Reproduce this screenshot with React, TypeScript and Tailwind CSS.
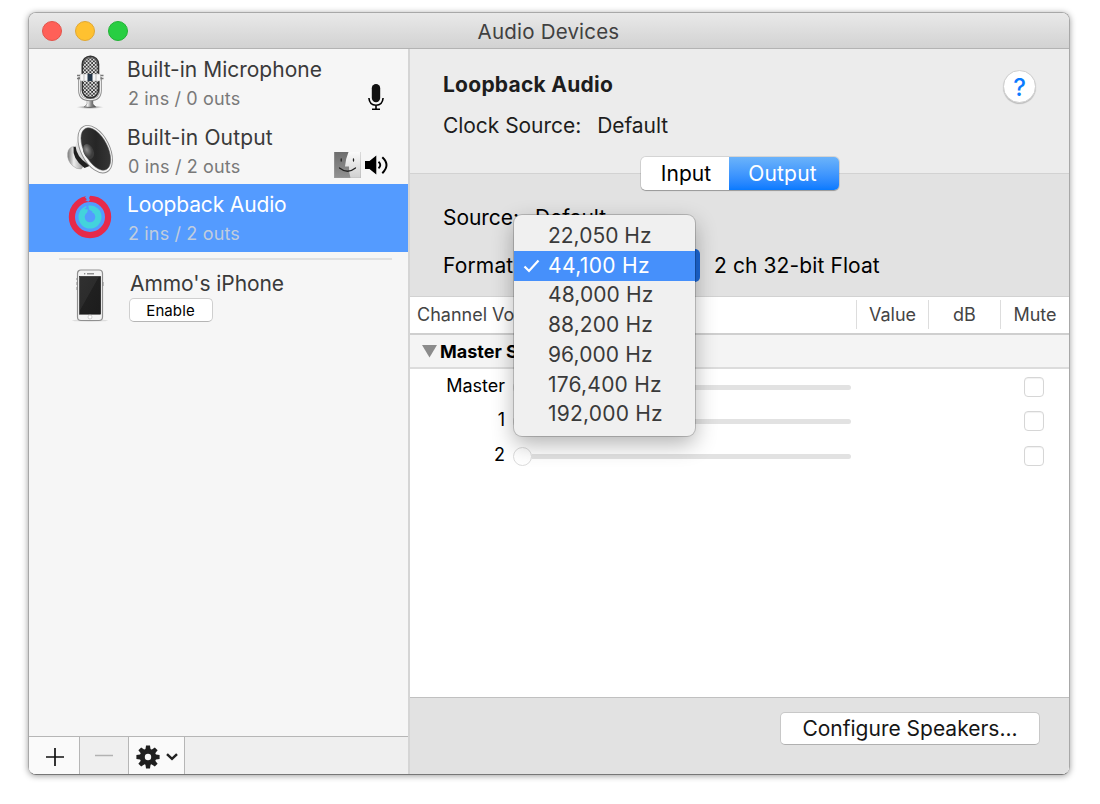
import type { ReactNode } from "react";

function Label({ children, className = "" }: { children: ReactNode; className?: string }) {
  return <span className={`block whitespace-nowrap ${className}`}>{children}</span>;
}

function MicrophoneIcon() {
  return (
    <svg width="30" height="56" viewBox="0 0 30 56" className="block">
      <defs>
        <linearGradient id="micMetal" x1="0" x2="1" y1="0" y2="0">
          <stop offset="0" stopColor="#666" />
          <stop offset=".3" stopColor="#f4f4f4" />
          <stop offset=".6" stopColor="#888" />
          <stop offset="1" stopColor="#444" />
        </linearGradient>
        <pattern id="micMesh" width="3.6" height="3.6" patternUnits="userSpaceOnUse">
          <rect width="3.6" height="3.6" fill="#2e2e2e" />
          <circle cx=".9" cy=".9" r="1.05" fill="#f4f4f4" />
          <circle cx="2.7" cy="2.7" r="1.05" fill="#e4e4e4" />
        </pattern>
        <radialGradient id="micBase">
          <stop offset="0" stopColor="#444" />
          <stop offset="1" stopColor="#aaa" stopOpacity="0" />
        </radialGradient>
      </defs>
      <ellipse cx="15" cy="52.200" rx="14" ry="1.800" fill="url(#micBase)" />
      <path d="M12 44h6v5l3 3H9l3-3z" fill="url(#micMetal)" stroke="#666" strokeWidth=".4" />
      <path d="M4.500 22v13q0 10 10.500 10T25.500 35V22" fill="none" stroke="#858585" strokeWidth="2.600" />
      <path d="M4.500 23v12q0 9.600 10.500 9.600T25.500 35V23" fill="none" stroke="#ececec" strokeWidth="1.100" />
      <rect x="7.300" y="1.200" width="16.200" height="41.800" rx="8" fill="url(#micMesh)" stroke="#333" strokeWidth="1.600" />
      <path d="M8.500 9q1-6.500 7-6.500t7 6.500" fill="none" stroke="#555" strokeWidth="1.600" opacity=".7" />
      <rect x="5" y="19" width="20.500" height="7" rx="1" fill="#f6f6f6" stroke="#aaa" strokeWidth=".5" />
      <rect x="12.500" y="19" width="5" height="7" fill="#26384a" />
      <path d="M9 19v7M21 19v7" stroke="#bbb" strokeWidth="1" />
      <path d="M2 20.500h3M2 23.500h3M25.500 20.500h3M25.500 23.500h3" stroke="#777" strokeWidth="1.400" />
    </svg>
  );
}

function LoudspeakerIcon() {
  return (
    <svg width="50" height="54" viewBox="0 0 50 54" className="block">
      <defs>
        <linearGradient id="spMagnet" x1="0" x2="1">
          <stop offset="0" stopColor="#777" />
          <stop offset=".35" stopColor="#eee" />
          <stop offset="1" stopColor="#888" />
        </linearGradient>
        <linearGradient id="spBody" x1="0" x2="1" y1="0" y2="1">
          <stop offset="0" stopColor="#f2f2f2" />
          <stop offset=".5" stopColor="#d0d0d0" />
          <stop offset="1" stopColor="#888" />
        </linearGradient>
        <linearGradient id="spCone" x1="0" x2="1" y1="0" y2="1">
          <stop offset="0" stopColor="#3c3c3c" />
          <stop offset=".5" stopColor="#262626" />
          <stop offset="1" stopColor="#3b3b3b" />
        </linearGradient>
        <radialGradient id="spDome" cx=".4" cy=".35">
          <stop offset="0" stopColor="#8e8e8e" />
          <stop offset="1" stopColor="#3e3e3e" />
        </radialGradient>
      </defs>
      <path d="M9 24.500q-5.500.5-6.300 6.500-.7 7.500 4.600 12.500 4 4 9 3.500l4-6z" fill="url(#spMagnet)" stroke="#999" strokeWidth=".5" />
      <path d="M8.500 25q-1.500 12 11 21l5-2-11-20z" fill="#202020" />
      <path d="M15 6Q12 20 10.500 24q1 11 12 18 9 5 18 9L20 4z" fill="url(#spBody)" />
      <ellipse cx="30.200" cy="27.200" rx="14.300" ry="25.600" transform="rotate(-27 30.200 27.200)" fill="#f6f6f6" stroke="#8c8c8c" strokeWidth=".9" />
      <ellipse cx="30.800" cy="27" rx="11.800" ry="23" transform="rotate(-27 30.800 27)" fill="url(#spCone)" stroke="#555" strokeWidth=".5" />
      <ellipse cx="23.500" cy="29.500" rx="5" ry="7.800" transform="rotate(-22 23.500 29.500)" fill="url(#spDome)" />
    </svg>
  );
}

function LoopbackIcon() {
  return (
    <svg width="44" height="44" viewBox="0 0 44 44" className="block" fill="none">
      <circle cx="22" cy="22" r="18.100" stroke="#e62a4a" strokeWidth="6.200" />
      <circle cx="22" cy="22" r="8.400" stroke="#43d3dc" strokeWidth="6.200" />
      <path d="M18.500 0L17 2.600l2 1.600-1.600 1 3 1.600L22 5l-1-2 1.500-3z" fill="#549bff" />
      <path d="M17.500 9l1 3.200-2 1.800 3.500.5-1 3.500 4 .5 1.500-2-3.500-2L20 9z" fill="#549bff" />
    </svg>
  );
}

function PhoneIcon() {
  return (
    <svg width="36" height="54" viewBox="0 0 36 54" className="block">
      <defs>
        <linearGradient id="phScreen" x1="0" x2="1" y1="0" y2="1">
          <stop offset="0" stopColor="#303030" />
          <stop offset=".45" stopColor="#2c2c2c" />
          <stop offset=".47" stopColor="#202020" />
          <stop offset="1" stopColor="#1c1c1c" />
        </linearGradient>
      </defs>
      <ellipse cx="18" cy="51.500" rx="18" ry="1.200" fill="#ddd" />
      <rect x="5.500" y="1" width="25" height="50.500" rx="3.500" fill="#f3f3f3" stroke="#909090" strokeWidth="1.200" />
      <rect x="7.500" y="7.400" width="21.200" height="37.800" fill="url(#phScreen)" stroke="#111" strokeWidth=".5" />
      <path d="M15 4.800h7" stroke="#777" strokeWidth="1.200" />
      <circle cx="12.700" cy="4.800" r=".7" fill="#777" />
      <circle cx="18" cy="48" r="2" fill="#fff" stroke="#bbb" strokeWidth=".7" />
      <path d="M5 9v2M5 13v3M5 18v3M31 13v4" stroke="#888" strokeWidth="1" />
    </svg>
  );
}

function FinderIcon() {
  return (
    <svg width="27" height="26" viewBox="0 0 27 26" className="block">
      <defs>
        <linearGradient id="fLeft" x1="0" x2="0" y1="0" y2="1">
          <stop offset="0" stopColor="#6e6e6e" />
          <stop offset="1" stopColor="#929292" />
        </linearGradient>
        <linearGradient id="fRight" x1="0" x2="0" y1="0" y2="1">
          <stop offset="0" stopColor="#fafafa" />
          <stop offset="1" stopColor="#d0d0d0" />
        </linearGradient>
      </defs>
      <rect width="27" height="26" fill="url(#fRight)" />
      <path d="M0 0h14.500Q11.500 7 11 14.500h4q-.300 6 1.500 11.500H0z" fill="url(#fLeft)" />
      <path d="M5.500 16q8 6.500 16 0" fill="none" stroke="#222" strokeWidth="1.300" strokeLinecap="round" />
      <path d="M7.200 7v2M19.500 7v2" stroke="#222" strokeWidth="1.300" strokeLinecap="round" />
      <path d="M.3 0v26h26.400V0" fill="none" stroke="#aaa" strokeWidth=".5" />
    </svg>
  );
}

function VolumeGlyph() {
  return (
    <svg width="24" height="20" viewBox="0 0 24 20" className="block" fill="none">
      <path d="M0 6h4.500L11.300.5v19L4.500 14H0z" fill="#000" />
      <path d="M13.500 6.800q3.600 3.200 0 6.600" stroke="#000" strokeWidth="1.900" />
      <path d="M17.300 2.200q8.400 7.800 0 16" stroke="#000" strokeWidth="2" />
    </svg>
  );
}

function MicGlyph() {
  return (
    <svg width="16" height="27" viewBox="0 0 16 27" className="block" fill="none">
      <rect x="3.800" y="0" width="8.400" height="18.300" rx="4.200" fill="#111" />
      <path d="M.9 14Q1.500 21.200 8 21.200T15.100 14M8 21v4M4 25.300h8" stroke="#000" strokeWidth="1.600" />
    </svg>
  );
}

function GearGlyph() {
  return (
    <svg width="24" height="24" viewBox="-12 -12 24 24" className="block">
      <g fill="#1f1f1f">
        {[0, 45, 90, 135].map((a) => (
          <path key={a} d="M-2.500 -8L-2 -11.600H2L2.500 -8V8L2 11.600H-2L-2.500 8z" transform={`rotate(${a})`} />
        ))}
        <circle r="8.300" />
      </g>
      <circle r="3.200" fill="#f8f8f8" />
    </svg>
  );
}

type DeviceProps = {
  name: string;
  detail: string;
  icon: ReactNode;
  nameClass: string;
  selected?: boolean;
  badges?: ReactNode;
};

function Device({ name, detail, icon, nameClass, selected, badges }: DeviceProps) {
  return (
    <div className={selected ? "flex h-[68px] bg-[#549bff] text-white" : "flex h-[67.5px] text-[#3a3a3a]"}>
      <div className="flex w-[98px] shrink-0 justify-end">{icon}</div>
      <div className="flex-1">
        <Label className={`mt-[6px] h-[29px] text-[21px] leading-[29px] ${nameClass}`}>{name}</Label>
        <Label className={`h-[29px] pl-px text-[18px] leading-[29px] tracking-[0.15px] ${selected ? "text-[#c1cddd]" : "text-[#797979]"}`}>
          {detail}
        </Label>
      </div>
      <div className="flex items-end gap-[4px] pr-[19px]">{badges}</div>
    </div>
  );
}

function Sidebar() {
  return (
    <aside className="flex w-[379px] shrink-0 flex-col bg-[#f6f6f6]">
      <Device
        name="Built-in Microphone"
        detail="2 ins / 0 outs"
        nameClass="tracking-[0px]"
        icon={<div className="mr-[22px] pt-[6px]"><MicrophoneIcon /></div>}
        badges={<div className="mr-[5px] pb-[6px]"><MicGlyph /></div>}
      />
      <Device
        name="Built-in Output"
        detail="0 ins / 2 outs"
        nameClass="tracking-[0.14px]"
        icon={<div className="mr-[12px] pt-[5px]"><LoudspeakerIcon /></div>}
        badges={<><div className="pb-[6px]"><FinderIcon /></div><div className="pb-[9px]"><VolumeGlyph /></div></>}
      />
      <Device
        name="Loopback Audio"
        detail="2 ins / 2 outs"
        nameClass="tracking-[-0.15px]"
        icon={<div className="mr-[15px] pt-[11px]"><LoopbackIcon /></div>}
        selected
      />
      <div className="ml-[30px] mr-[16px] mt-[6px] h-[2px] shrink-0 bg-[#e0e0e0]" />
      <div className="mt-[9px] flex text-[#3a3a3a]">
        <div className="ml-[43px] w-[57px]"><PhoneIcon /></div>
        <div>
          <Label className="pl-px text-[21px] leading-[29px] tracking-[-0.08px]">Ammo's iPhone</Label>
          <button className="block h-[24px] w-[84px] rounded-[5px] border border-[#cfcfcf] border-b-[#b5b5b5] bg-white pr-px text-center text-[15px] leading-[23px] tracking-[0.1px] text-black">
            Enable
          </button>
        </div>
      </div>
      <div className="flex-1" />
      <div className="flex h-[38px] shrink-0 border-t-[1.500px] border-[#b6b6b6] bg-[#efefef]">
        <div className="flex w-[51px] items-center justify-center border-r border-[#b6b6b6] bg-[#fafafa] pl-[2px] pt-[2px]">
          <svg width="20" height="20" viewBox="0 0 20 20" className="block"><path d="M1 10h18M10 1v18" stroke="#111" strokeWidth="1.700" /></svg>
        </div>
        <div className="flex w-[49px] items-center justify-center border-r border-[#b6b6b6]">
          <svg width="20" height="20" viewBox="0 0 20 20" className="block"><path d="M1 9.500h18" stroke="#b2b2b2" strokeWidth="1.500" /></svg>
        </div>
        <div className="flex w-[56px] items-center gap-[5px] border-r border-[#b6b6b6] bg-[#fafafa] pl-[7px] pt-[2px]">
          <GearGlyph />
          <svg width="14" height="10" viewBox="0 0 14 10" className="block"><path d="M2 2.200l5 4.600 5-4.600" stroke="#222" strokeWidth="2.500" fill="none" /></svg>
        </div>
      </div>
    </aside>
  );
}

const RATES = [
  { label: "22,050 Hz", tracking: "tracking-[0px]" },
  { label: "44,100 Hz", tracking: "tracking-[0.36px]" },
  { label: "48,000 Hz", tracking: "tracking-[0.1px]" },
  { label: "88,200 Hz", tracking: "tracking-[0.1px]" },
  { label: "96,000 Hz", tracking: "tracking-[0.1px]" },
  { label: "176,400 Hz", tracking: "tracking-[0.22px]" },
  { label: "192,000 Hz", tracking: "tracking-[0.22px]" },
];

function RateMenu() {
  return (
    <div className="absolute left-[104px] top-[166px] z-10 h-[221px] w-[181px] rounded-[8px] bg-[#f0f0f0] py-[6.500px] text-[21px] text-[#3a3a3a] shadow-[0_0_0_1px_rgba(0,0,0,0.18),0_8px_22px_rgba(0,0,0,0.3)]">
      {RATES.map(({ label, tracking }) => {
        const checked = label === "44,100 Hz";
        return (
          <div key={label} className={checked ? "flex h-[29.700px] items-center bg-[#4690fb] text-white" : "flex h-[29.700px] items-center"}>
            <div className="w-[34px] pl-[9px]">
              {checked && (
                <svg width="17" height="14" viewBox="0 0 17 14" className="block"><path d="M1.500 7.500l4.500 4.500L15.500 1.500" stroke="#fff" strokeWidth="2.200" fill="none" /></svg>
              )}
            </div>
            <Label className={`-mt-px ${tracking}`}>{label}</Label>
          </div>
        );
      })}
    </div>
  );
}

function ChannelRow({ name }: { name: string }) {
  return (
    <div className="flex h-[34.600px] items-center">
      <Label className="w-[95px] text-right text-[18px] text-black">{name}</Label>
      <div className="ml-[8px] mt-[4px] flex w-[338px] items-center">
        <div className="h-[19px] w-[19px] shrink-0 rounded-full border border-[#dcdcdc] bg-white" />
        <div className="h-[5px] flex-1 rounded-r-full bg-[#e2e2e2]" />
      </div>
      <div className="ml-[173px] mt-[3px] h-[20px] w-[20px] rounded-[4px] border border-[#d6d6d6] bg-white shadow-[inset_0_1px_1px_rgba(0,0,0,0.06)]" />
    </div>
  );
}

function Detail() {
  return (
    <main className="relative flex flex-1 flex-col border-l-2 border-[#d5d5d5] bg-white">
      <header className="flex h-[124px] shrink-0 justify-between bg-[#ececec] pl-[33px] pr-[33px] text-[#1d1d1d]">
        <div>
          <Label className="mt-[22px] text-[21px] font-bold leading-[28px] tracking-[0.25px]">Loopback Audio</Label>
          <div className="mt-[13px] flex gap-[16px] text-[21px] leading-[28px] tracking-[-0.05px]">
            <Label>Clock Source:</Label>
            <Label>Default</Label>
          </div>
        </div>
        <button className="mt-[21px] flex h-[33px] w-[33px] items-center justify-center rounded-full border border-[#cfcfcf] bg-white pt-[2px] text-[24px] font-medium text-[#0a7bff] shadow-[0_1px_1px_rgba(0,0,0,0.2)]">?</button>
      </header>
      <section className="h-[124px] shrink-0 border-b border-t border-[#d2d2d2] bg-[#e2e2e2] pl-[33px] text-[21px] leading-[28px] text-black">
        <div className="-mt-[17px] ml-[198px] flex h-[33px] w-[198px] rounded-[5px] shadow-[0_1px_1px_rgba(0,0,0,0.25),0_0_0_1px_rgba(0,0,0,0.1)]">
          <div className="flex w-[88px] items-center justify-center rounded-l-[5px] bg-white pl-[2px]"><Label className="tracking-[0.1px]">Input</Label></div>
          <div className="flex flex-1 items-center justify-center rounded-r-[5px] bg-gradient-to-b from-[#6bb3fa] to-[#067aff] pr-[3px] text-white"><Label className="tracking-[0.2px]">Output</Label></div>
        </div>
        <div className="mt-[14px] flex gap-[16px] tracking-[-0.05px]">
          <Label>Source:</Label>
          <Label>Default</Label>
        </div>
        <div className="mt-[16px] flex h-[35px] items-center">
          <Label className="w-[76px] tracking-[0.15px]">Format:</Label>
          <div className="h-[33px] w-[181px] rounded-[5px] bg-[#1c68d9]" />
          <Label className="ml-[14px] tracking-[0.1px]">2 ch 32-bit Float</Label>
        </div>
      </section>
      <div className="flex h-[38px] shrink-0 items-center border-b-2 border-[#cfcfcf] pb-[2px] text-[18px] text-[#444]">
        <Label className="flex-1 pl-[7px]">Channel Volume</Label>
        <div className="flex h-[29px] w-[72px] items-center justify-center border-l border-[#ddd]"><Label>Value</Label></div>
        <div className="flex h-[29px] w-[72px] items-center justify-center border-l border-[#ddd]"><Label>dB</Label></div>
        <div className="flex h-[29px] w-[69px] items-center justify-center border-l border-[#ddd]"><Label>Mute</Label></div>
      </div>
      <div className="flex h-[34px] shrink-0 items-center border-b-2 border-[#dcdcdc] bg-[#f4f4f4] pl-[12px] text-[18px] font-bold text-black">
        <svg width="15" height="13" viewBox="0 0 15 13" className="mr-[3px] block"><path d="M0 0h15L7.500 12.500z" fill="#8b8b8b" /></svg>
        <Label className="pt-px">Master Stream</Label>
      </div>
      <div className="-mt-px flex-1">
        <ChannelRow name="Master" />
        <ChannelRow name="1" />
        <ChannelRow name="2" />
      </div>
      <footer className="flex h-[77px] shrink-0 justify-end border-t border-[#c0c0c0] bg-[#e2e2e2] pr-[29px] pt-[14px]">
        <button className="h-[33px] w-[260px] rounded-[5px] border border-[#c8c8c8] border-b-[#b0b0b0] bg-white text-[21px] leading-[31px] text-[#161616]">
          Configure Speakers...
        </button>
      </footer>
      <RateMenu />
    </main>
  );
}

export default function App() {
  return (
    <div className="h-[804px] w-[1100px] overflow-hidden bg-white pl-[28px] pt-[12px] font-['Inter','Liberation_Sans',sans-serif]">
      <div className="flex h-[763px] w-[1042px] flex-col overflow-hidden rounded-[8px] border border-[#a8a8a8] border-b-[#777] shadow-[0_1px_6px_rgba(0,0,0,0.38)]">
        <div className="flex h-[36px] shrink-0 items-center border-b border-[#b3b3b3] bg-gradient-to-b from-[#e9e9e9] to-[#d2d2d2]">
          <div className="flex w-[140px] gap-[13px] pl-[13px]">
            <div className="h-[20px] w-[20px] rounded-full border border-[#e2544c] bg-[#ff6058]" />
            <div className="h-[20px] w-[20px] rounded-full border border-[#e0a732] bg-[#ffc130]" />
            <div className="h-[20px] w-[20px] rounded-full border border-[#22b236] bg-[#28ce42]" />
          </div>
          <Label className="flex-1 pr-[141px] pt-[3px] text-center text-[20.500px] tracking-[0.2px] text-[#404040]">Audio Devices</Label>
        </div>
        <div className="flex min-h-0 flex-1">
          <Sidebar />
          <Detail />
        </div>
      </div>
    </div>
  );
}
